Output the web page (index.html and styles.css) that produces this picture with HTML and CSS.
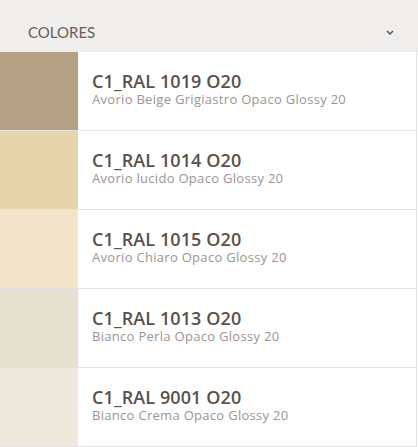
FILE: index.html
```html
<!DOCTYPE html>
<html lang="es">
<head>
  <meta charset="UTF-8" />
  <meta name="viewport" content="width=device-width, initial-scale=1.0"/>
  <title>Colores</title>
  <link rel="stylesheet" href="styles.css">
</head>
<body>
  <div class="panel">
    <div class="panel-header">
      <span class="panel-title">COLORES</span>
      <svg class="chevron" width="8" height="5" viewBox="0 0 8 5">
        <path d="M1 1 L4 4 L7 1" fill="none" stroke="#555" stroke-width="1.5"/>
      </svg>
    </div>

    <ul class="color-list">
      <li class="color-item">
        <div class="swatch swatch-1019"></div>
        <div class="color-info">
          <div class="color-code">C1_RAL 1019 O20</div>
          <div class="color-name">Avorio Beige Grigiastro Opaco Glossy 20</div>
        </div>
      </li>
      <li class="color-item">
        <div class="swatch swatch-1014"></div>
        <div class="color-info">
          <div class="color-code">C1_RAL 1014 O20</div>
          <div class="color-name">Avorio lucido Opaco Glossy 20</div>
        </div>
      </li>
      <li class="color-item">
        <div class="swatch swatch-1015"></div>
        <div class="color-info">
          <div class="color-code">C1_RAL 1015 O20</div>
          <div class="color-name">Avorio Chiaro Opaco Glossy 20</div>
        </div>
      </li>
      <li class="color-item">
        <div class="swatch swatch-1013"></div>
        <div class="color-info">
          <div class="color-code">C1_RAL 1013 O20</div>
          <div class="color-name">Bianco Perla Opaco Glossy 20</div>
        </div>
      </li>
      <li class="color-item">
        <div class="swatch swatch-9001"></div>
        <div class="color-info">
          <div class="color-code">C1_RAL 9001 O20</div>
          <div class="color-name">Bianco Crema Opaco Glossy 20</div>
        </div>
      </li>
    </ul>
  </div>
</body>
</html>
```

FILE: styles.css
```css
body {
  margin: 0;
  font-family: Lato, "Open Sans", sans-serif;
  background: #fff;
}
.panel {
  width: 418px;
}
.panel-header {
  height: 52px;
  background: #efeeec;
  display: flex;
  align-items: center;
  justify-content: space-between;
  padding: 0 24px 0 28px;
  box-sizing: border-box;
}
.panel-title {
  font-size: 15px;
  color: #685f59;
  padding-top: 12px;
}
.chevron {
  margin-top: 12px;
}
.color-list {
  list-style: none;
  margin: 0;
  padding: 0;
  border-right: 1px solid #e4e4e4;
  width: 416px;
}
.color-item {
  display: flex;
  height: 78px;
  border-bottom: 1px solid #e2e2e2;
}
.swatch {
  width: 78px;
  flex-shrink: 0;
}
.swatch-1019 { background: #b4a083; }
.swatch-1014 { background: #e5d4ac; }
.swatch-1015 { background: #f2e5c9; }
.swatch-1013 { background: #e6e0d0; }
.swatch-9001 { background: #eee8dc; }
.color-info {
  display: flex;
  flex-direction: column;
  justify-content: center;
  padding-left: 14px;
  padding-bottom: 4px;
  font-family: "Open Sans", sans-serif;
}
.color-code {
  font-size: 18px;
  font-weight: 600;
  color: #5b504a;
  line-height: 21px;
  letter-spacing: 0.1px;
}
.color-name {
  font-size: 13px;
  color: #9b9592;
  line-height: 15px;
  letter-spacing: 0.3px;
}
```
